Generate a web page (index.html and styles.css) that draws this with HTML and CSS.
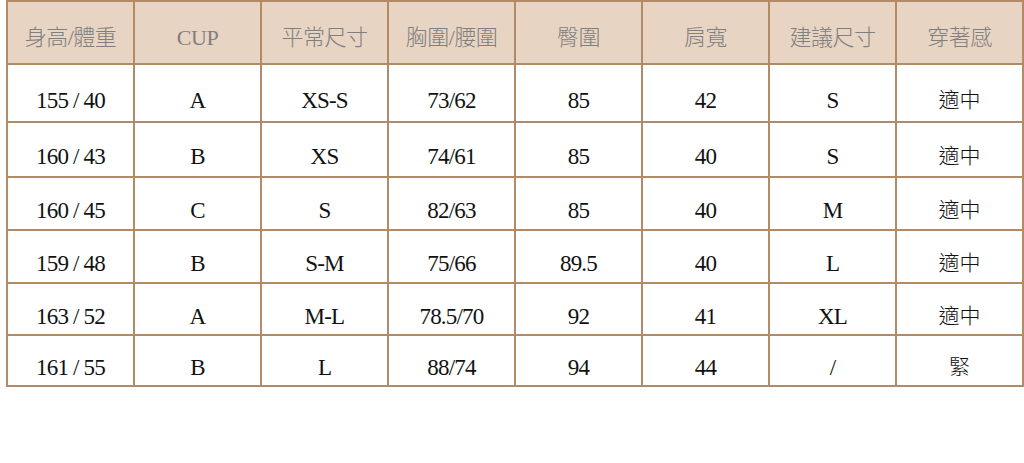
FILE: index.html
```html
<!DOCTYPE html>
<html lang="zh-Hant">
<head>
<meta charset="utf-8">
<title>尺寸表</title>
<link rel="stylesheet" href="styles.css">
</head>
<body>
<table class="size-table">
  <colgroup>
    <col class="c"><col class="c"><col class="c"><col class="c"><col class="c"><col class="c"><col class="c"><col class="c">
  </colgroup>
  <thead>
    <tr class="head">
      <th>身高/體重</th><th>CUP</th><th>平常尺寸</th><th>胸圍/腰圍</th><th>臀圍</th><th>肩寬</th><th>建議尺寸</th><th>穿著感</th>
    </tr>
  </thead>
  <tbody>
    <tr class="r1"><td>155 / 40</td><td>A</td><td>XS-S</td><td>73/62</td><td>85</td><td>42</td><td>S</td><td class="cjk">適中</td></tr>
    <tr class="r2"><td>160 / 43</td><td>B</td><td>XS</td><td>74/61</td><td>85</td><td>40</td><td>S</td><td class="cjk">適中</td></tr>
    <tr class="r3"><td>160 / 45</td><td>C</td><td>S</td><td>82/63</td><td>85</td><td>40</td><td>M</td><td class="cjk">適中</td></tr>
    <tr class="r4"><td>159 / 48</td><td>B</td><td>S-M</td><td>75/66</td><td>89.5</td><td>40</td><td>L</td><td class="cjk">適中</td></tr>
    <tr class="r5"><td>163 / 52</td><td>A</td><td>M-L</td><td>78.5/70</td><td>92</td><td>41</td><td>XL</td><td class="cjk">適中</td></tr>
    <tr class="r6"><td>161 / 55</td><td>B</td><td>L</td><td>88/74</td><td>94</td><td>44</td><td>/</td><td class="cjk">緊</td></tr>
  </tbody>
</table>
</body>
</html>
```

FILE: styles.css
```css
html, body {
  margin: 0;
  padding: 0;
  background: #ffffff;
}

body {
  padding-left: 6px;
  font-family: "Liberation Serif", "Noto Sans CJK TC", serif;
}

.size-table {
  border-collapse: collapse;
  table-layout: fixed;
  width: 1018px;
}

.c {
  width: 127px;
}

.size-table th,
.size-table td {
  border: 2px solid #b28a66;
  text-align: center;
  vertical-align: middle;
  padding: 10px 0 0 0;
  line-height: 1;
  white-space: nowrap;
}

.size-table th {
  background: #e7d4c3;
  color: #7f7f7f;
  font-weight: 300;
  font-size: 22px;
  font-family: "Liberation Serif", "Noto Sans CJK TC", serif;
  letter-spacing: -0.5px;
}

.size-table td {
  color: #111111;
  font-size: 23px;
  letter-spacing: -0.8px;
  padding-top: 14px;
}

.size-table td.cjk {
  font-size: 21px;
  font-weight: 300;
  letter-spacing: 0;
}

.head { height: 63px; }
.r1 { height: 58px; }
.r2 { height: 55px; }
.r3 { height: 53px; }
.r4 { height: 53px; }
.r5 { height: 52px; }
.r6 { height: 51px; }
```
